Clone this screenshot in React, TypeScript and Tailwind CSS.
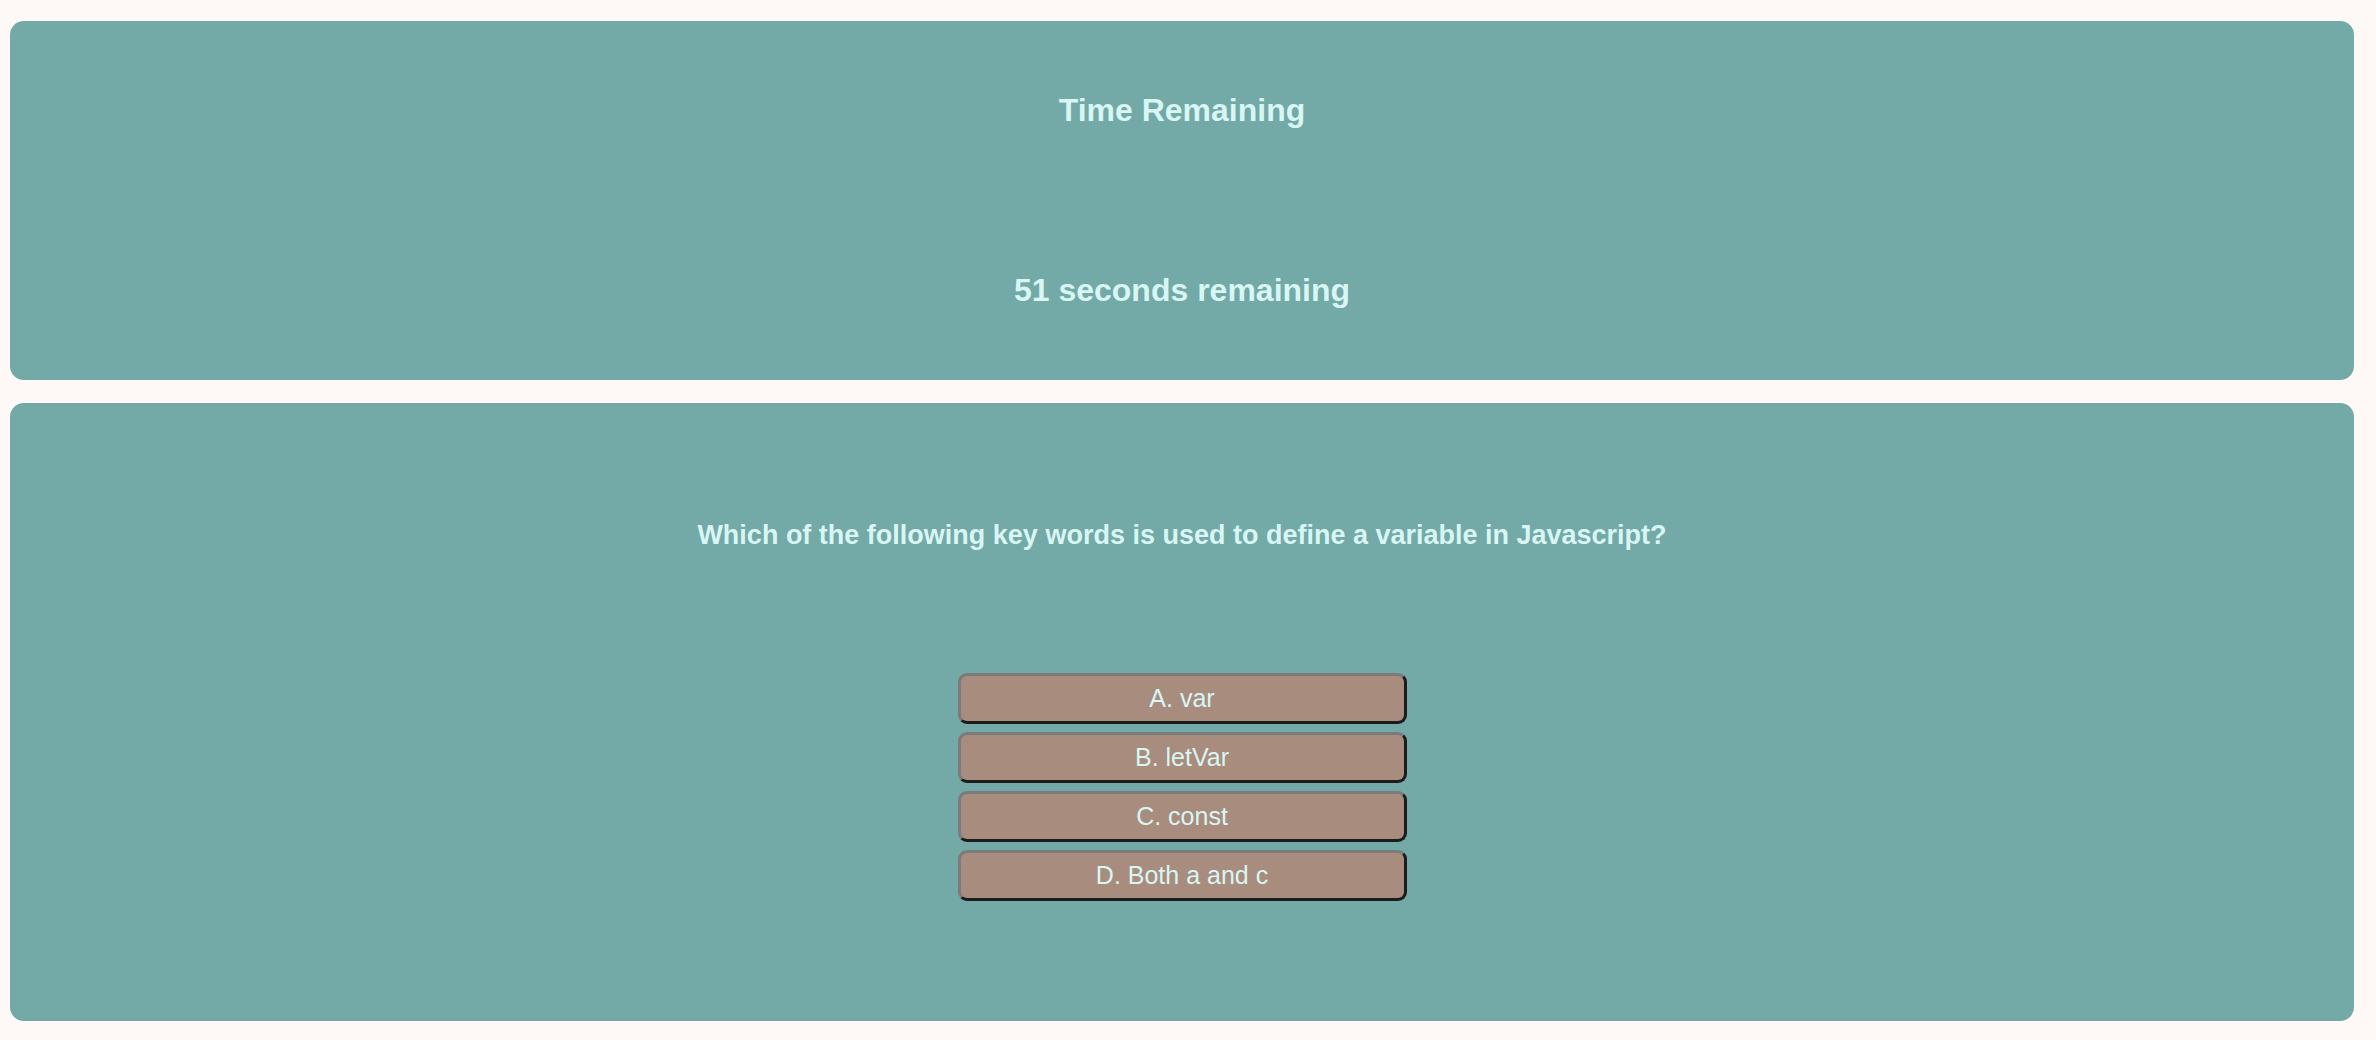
const options = ['A. var', 'B. letVar', 'C. const', 'D. Both a and c'];

const App = () => {
  return (
    <div className="min-h-[1040px] bg-[#fef9f6] pt-[21px] pb-[19px] pl-[10px] pr-[22px] font-['Liberation_Sans',Arial,sans-serif] text-[#d8f6f4]">
      <section className="h-[359px] rounded-[14px] bg-[#73a9a6] pt-[71px] flex flex-col items-center">
        <h2 className="text-[32px] leading-[37px] font-bold">Time Remaining</h2>
        <p className="mt-[143px] text-[32px] leading-[37px] font-bold">51 seconds remaining</p>
      </section>

      <section className="mt-[23px] h-[618px] rounded-[14px] bg-[#73a9a6] pt-[117px] flex flex-col items-center">
        <h3 className="text-[27px] leading-[31px] font-bold">
          Which of the following key words is used to define a variable in Javascript?
        </h3>
        <div className="mt-[122px] flex flex-col gap-[8px] w-[449px]">
          {options.map((opt) => (
            <button
              key={opt}
              className="h-[51px] rounded-[9px] border-[3px] border-t-[#7b7b7b] border-l-[#7b7b7b] border-b-[#1c1c1c] border-r-[#1c1c1c] bg-[#a88c7e] text-[25px] leading-[29px] text-[#d8f6f4]"
            >
              {opt}
            </button>
          ))}
        </div>
      </section>
    </div>
  );
};

export default App;
